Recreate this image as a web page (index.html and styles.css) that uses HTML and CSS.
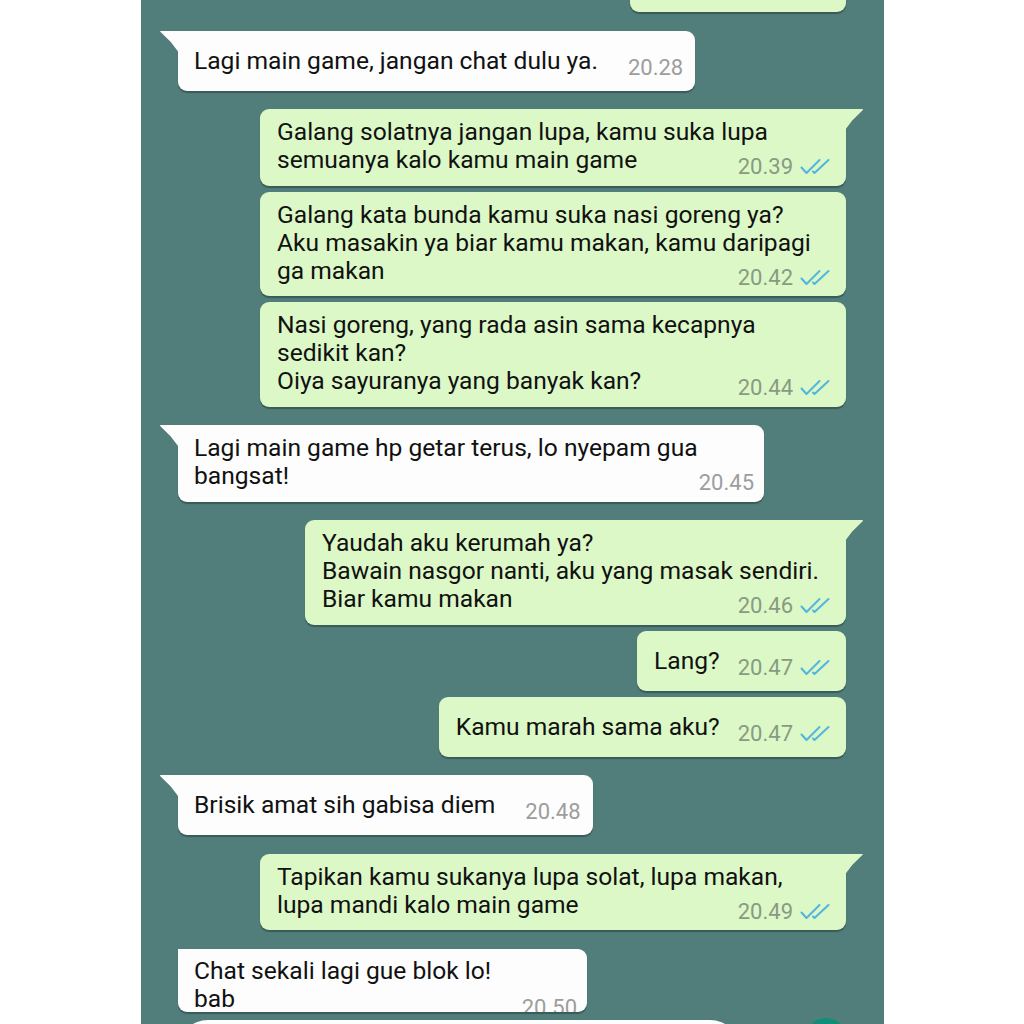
FILE: index.html
```html
<!DOCTYPE html>
<html lang="id">
<head>
<meta charset="utf-8">
<title>Chat</title>
<link rel="stylesheet" href="styles.css">
</head>
<body>
<div class="screen">
  <div class="msg out top-cut"></div>

  <div class="msg in tail single grp">
    <div class="row"><span>Lagi main game, jangan chat dulu ya.</span><span class="meta">20.28</span></div>
  </div>

  <div class="msg out tail multi full grp">
    <div class="line">Galang solatnya jangan lupa, kamu suka lupa</div>
    <div class="row"><span>semuanya kalo kamu main game</span><span class="meta">20.39<svg class="ticks" viewBox="0 0 32 17"><path d="M1.5 9.5 L6.5 15 L19.5 2 M13 13.5 L14.5 15 L28.5 2"/></svg></span></div>
  </div>

  <div class="msg out multi full">
    <div class="line">Galang kata bunda kamu suka nasi goreng ya?</div>
    <div class="line">Aku masakin ya biar kamu makan, kamu daripagi</div>
    <div class="row"><span>ga makan</span><span class="meta">20.42<svg class="ticks" viewBox="0 0 32 17"><path d="M1.5 9.5 L6.5 15 L19.5 2 M13 13.5 L14.5 15 L28.5 2"/></svg></span></div>
  </div>

  <div class="msg out multi full">
    <div class="line">Nasi goreng, yang rada asin sama kecapnya</div>
    <div class="line">sedikit kan?</div>
    <div class="row"><span>Oiya sayuranya yang banyak kan?</span><span class="meta">20.44<svg class="ticks" viewBox="0 0 32 17"><path d="M1.5 9.5 L6.5 15 L19.5 2 M13 13.5 L14.5 15 L28.5 2"/></svg></span></div>
  </div>

  <div class="msg in tail multi full grp">
    <div class="line">Lagi main game hp getar terus, lo nyepam gua</div>
    <div class="row"><span>bangsat!</span><span class="meta">20.45</span></div>
  </div>

  <div class="msg out tail multi w541 grp">
    <div class="line">Yaudah aku kerumah ya?</div>
    <div class="line">Bawain nasgor nanti, aku yang masak sendiri.</div>
    <div class="row"><span>Biar kamu makan</span><span class="meta">20.46<svg class="ticks" viewBox="0 0 32 17"><path d="M1.5 9.5 L6.5 15 L19.5 2 M13 13.5 L14.5 15 L28.5 2"/></svg></span></div>
  </div>

  <div class="msg out single">
    <div class="row"><span>Lang?</span><span class="meta">20.47<svg class="ticks" viewBox="0 0 32 17"><path d="M1.5 9.5 L6.5 15 L19.5 2 M13 13.5 L14.5 15 L28.5 2"/></svg></span></div>
  </div>

  <div class="msg out single">
    <div class="row"><span>Kamu marah sama aku?</span><span class="meta">20.47<svg class="ticks" viewBox="0 0 32 17"><path d="M1.5 9.5 L6.5 15 L19.5 2 M13 13.5 L14.5 15 L28.5 2"/></svg></span></div>
  </div>

  <div class="msg in tail single grp">
    <div class="row"><span>Brisik amat sih gabisa diem</span><span class="meta">20.48</span></div>
  </div>

  <div class="msg out tail multi full grp">
    <div class="line">Tapikan kamu sukanya lupa solat, lupa makan,</div>
    <div class="row"><span>lupa mandi kalo main game</span><span class="meta">20.49<svg class="ticks" viewBox="0 0 32 17"><path d="M1.5 9.5 L6.5 15 L19.5 2 M13 13.5 L14.5 15 L28.5 2"/></svg></span></div>
  </div>

  <div class="msg in tail multi cut w409 grp">
    <div class="line">Chat sekali lagi gue blok lo!</div>
    <div class="row"><span>bab<span class="blot"></span></span><span class="meta low">20.50</span></div>
  </div>

  <div class="inputbar">
    <div class="field"></div>
    <div class="send"></div>
  </div>
</div>
</body>
</html>
```
FILE: styles.css
```css
html, body {
  margin: 0;
  padding: 0;
  background: #ffffff;
}

.screen {
  width: 743px;
  height: 1024px;
  margin-left: 141px;
  box-sizing: border-box;
  padding: 0 38px 0 37px;
  background: #517e7a;
  overflow: hidden;
  display: flex;
  flex-direction: column;
  font-family: Roboto, "Noto Sans", sans-serif;
  color: #111111;
}

.msg {
  position: relative;
  box-sizing: border-box;
  max-width: 586px;
  border-radius: 9px;
  box-shadow: 0 1.5px 1px rgba(0, 0, 0, 0.28);
  font-size: 24.6px;
  line-height: 28px;
  margin-top: 6px;
  flex: none;
}

.msg.grp {
  margin-top: 18.5px;
}

.in {
  align-self: flex-start;
  background: #fcfdfc;
}

.out {
  align-self: flex-end;
  background: #dcf8c7;
}

.full {
  width: 586px;
}

.w541 {
  width: 541px;
}

.w409 {
  width: 409px;
}

.top-cut {
  width: 216px;
  height: 60px;
  margin-top: -48px;
}

.in.tail {
  border-top-left-radius: 0;
}

.out.tail {
  border-top-right-radius: 0;
}

.in.tail::before,
.out.tail::after {
  content: "";
  position: absolute;
  top: 0;
  width: 18px;
  height: 21px;
}

.in.tail::before {
  left: -18px;
  background: #fcfdfc;
  clip-path: polygon(0 0, 100% 0, 100% 100%, 60% 55%, 2% 6%);
}

.out.tail::after {
  right: -17px;
  background: #dcf8c7;
  clip-path: polygon(0 0, 100% 0, 98% 6%, 40% 55%, 0 100%);
}

.single {
  padding: 16px 12px 13px 16px;
}

.out.single {
  padding: 16px 14px 13px 17px;
}

.multi {
  padding: 9px 10px 8.5px 16px;
}

.out.multi {
  padding: 9px 14px 8.5px 17px;
}

.line {
  white-space: nowrap;
}

.row {
  display: flex;
  justify-content: space-between;
  align-items: flex-start;
  gap: 30px;
  white-space: nowrap;
}

.out .row {
  gap: 18px;
}

.meta {
  display: flex;
  align-items: center;
  gap: 7px;
  margin-top: 10px;
  font-size: 22px;
  line-height: 21px;
  color: #9d9d9d;
}

.out .meta {
  color: #889b82;
}

.ticks {
  width: 32px;
  height: 17px;
  fill: none;
  stroke: #53b6dc;
  stroke-width: 2.1;
  stroke-linecap: round;
  stroke-linejoin: round;
}

.cut {
  height: 63px;
  padding-top: 8px;
  overflow: hidden;
}

.meta.low {
  margin-top: 12px;
}

.blot {
  display: inline-block;
  width: 34px;
  height: 22px;
  margin-left: 2px;
  vertical-align: -8px;
  background: #fcfdfc;
  border-radius: 50%;
}

.inputbar {
  display: flex;
  align-items: flex-start;
  justify-content: space-between;
  margin-top: 8px;
  flex: none;
}

.field {
  width: 562px;
  height: 60px;
  background: #fcfdfc;
  border-radius: 30px;
}

.send {
  width: 40px;
  height: 40px;
  margin-top: -2px;
  border-radius: 50%;
  background: #0f8f78;
}
```
